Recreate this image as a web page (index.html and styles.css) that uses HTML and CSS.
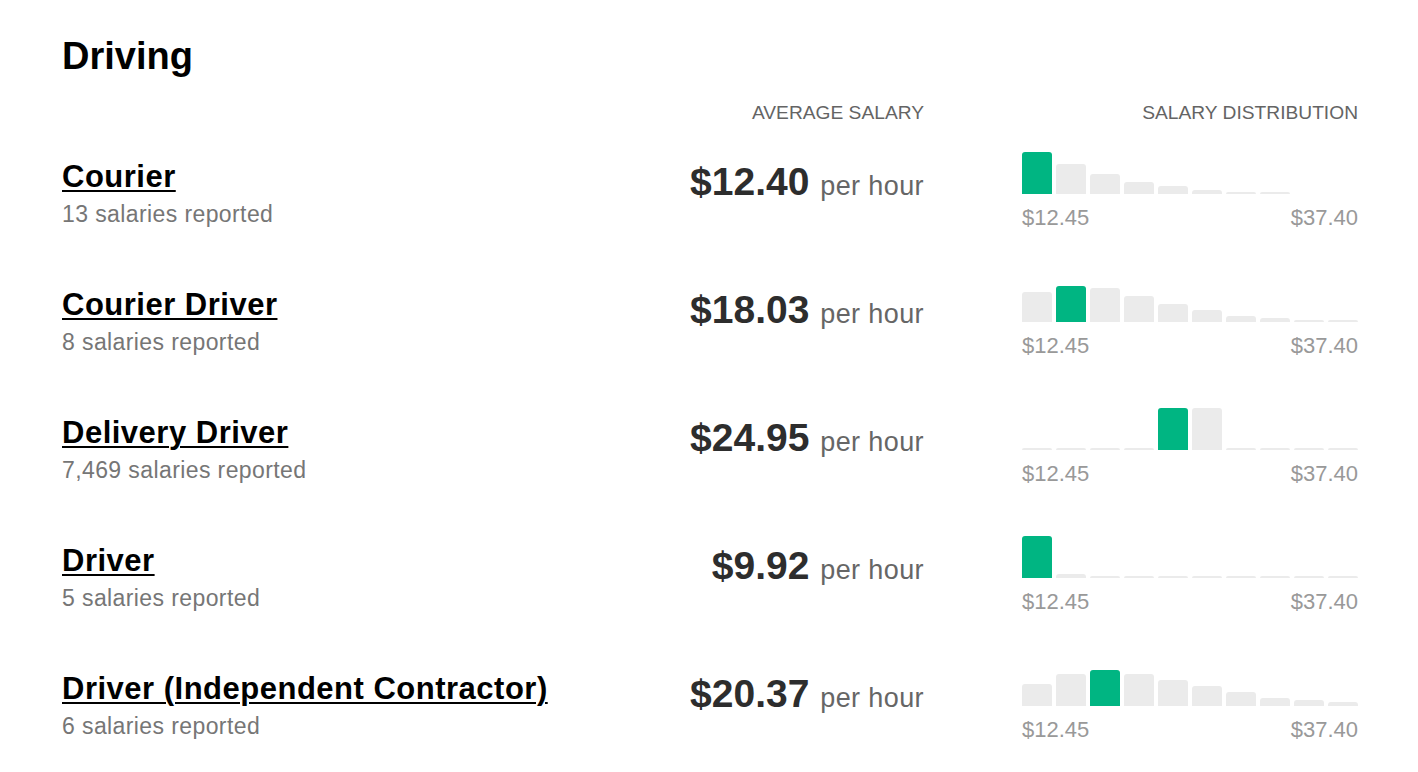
FILE: index.html
```html
<!DOCTYPE html>
<html lang="en">
<head>
<meta charset="utf-8">
<title>Driving salaries</title>
<link rel="stylesheet" href="styles.css">
</head>
<body>
<main class="page">
  <h1 class="heading">Driving</h1>
  <div class="grid head">
    <div></div>
    <div class="col-label">AVERAGE SALARY</div>
    <div class="col-label">SALARY DISTRIBUTION</div>
  </div>
  <div class="rows">
    <div class="grid row">
      <div class="job"><a class="job-title" href="#">Courier</a><div class="job-sub">13 salaries reported</div></div>
      <div class="salary"><span class="amount">$12.40</span> <span class="unit">per hour</span></div>
      <div class="chart">
        <div class="bars">
          <span class="bar on" style="height:42px"></span><span class="bar" style="height:30px"></span><span class="bar" style="height:20px"></span><span class="bar" style="height:12px"></span><span class="bar" style="height:8px"></span><span class="bar" style="height:4px"></span><span class="bar" style="height:2px"></span><span class="bar" style="height:2px"></span><span class="bar" style="height:0px"></span><span class="bar" style="height:0px"></span>
        </div>
        <div class="range"><span>$12.45</span><span>$37.40</span></div>
      </div>
    </div>
    <div class="grid row">
      <div class="job"><a class="job-title" href="#">Courier Driver</a><div class="job-sub">8 salaries reported</div></div>
      <div class="salary"><span class="amount">$18.03</span> <span class="unit">per hour</span></div>
      <div class="chart">
        <div class="bars">
          <span class="bar" style="height:30px"></span><span class="bar on" style="height:36px"></span><span class="bar" style="height:34px"></span><span class="bar" style="height:26px"></span><span class="bar" style="height:18px"></span><span class="bar" style="height:12px"></span><span class="bar" style="height:6px"></span><span class="bar" style="height:4px"></span><span class="bar" style="height:2px"></span><span class="bar" style="height:2px"></span>
        </div>
        <div class="range"><span>$12.45</span><span>$37.40</span></div>
      </div>
    </div>
    <div class="grid row">
      <div class="job"><a class="job-title" href="#">Delivery Driver</a><div class="job-sub">7,469 salaries reported</div></div>
      <div class="salary"><span class="amount">$24.95</span> <span class="unit">per hour</span></div>
      <div class="chart">
        <div class="bars">
          <span class="bar" style="height:2px"></span><span class="bar" style="height:2px"></span><span class="bar" style="height:2px"></span><span class="bar" style="height:2px"></span><span class="bar on" style="height:42px"></span><span class="bar" style="height:42px"></span><span class="bar" style="height:2px"></span><span class="bar" style="height:2px"></span><span class="bar" style="height:2px"></span><span class="bar" style="height:2px"></span>
        </div>
        <div class="range"><span>$12.45</span><span>$37.40</span></div>
      </div>
    </div>
    <div class="grid row">
      <div class="job"><a class="job-title" href="#">Driver</a><div class="job-sub">5 salaries reported</div></div>
      <div class="salary"><span class="amount">$9.92</span> <span class="unit">per hour</span></div>
      <div class="chart">
        <div class="bars">
          <span class="bar on" style="height:42px"></span><span class="bar" style="height:4px"></span><span class="bar" style="height:2px"></span><span class="bar" style="height:2px"></span><span class="bar" style="height:2px"></span><span class="bar" style="height:2px"></span><span class="bar" style="height:2px"></span><span class="bar" style="height:2px"></span><span class="bar" style="height:2px"></span><span class="bar" style="height:2px"></span>
        </div>
        <div class="range"><span>$12.45</span><span>$37.40</span></div>
      </div>
    </div>
    <div class="grid row">
      <div class="job"><a class="job-title" href="#">Driver (Independent Contractor)</a><div class="job-sub">6 salaries reported</div></div>
      <div class="salary"><span class="amount">$20.37</span> <span class="unit">per hour</span></div>
      <div class="chart">
        <div class="bars">
          <span class="bar" style="height:22px"></span><span class="bar" style="height:32px"></span><span class="bar on" style="height:36px"></span><span class="bar" style="height:32px"></span><span class="bar" style="height:26px"></span><span class="bar" style="height:20px"></span><span class="bar" style="height:14px"></span><span class="bar" style="height:8px"></span><span class="bar" style="height:6px"></span><span class="bar" style="height:4px"></span>
        </div>
        <div class="range"><span>$12.45</span><span>$37.40</span></div>
      </div>
    </div>
  </div>
</main>
</body>
</html>
```

FILE: styles.css
```css
* { box-sizing: border-box; }
html, body { margin: 0; padding: 0; background: #fff; }
body {
  font-family: "Liberation Sans", Arial, Helvetica, sans-serif;
  color: #333;
}
.page {
  padding: 34px 60px 0 62px;
}
.heading {
  margin: 0;
  font-size: 38px;
  line-height: 44px;
  font-weight: 700;
  color: #000;
}
.grid {
  display: grid;
  grid-template-columns: 1fr auto 336px;
  column-gap: 98px;
  align-items: start;
}
.head {
  margin-top: 24px;
}
.col-label {
  font-size: 19.2px;
  line-height: 22px;
  color: #646464;
  text-align: right;
}
.rows {
  margin-top: 28px;
  display: flex;
  flex-direction: column;
  gap: 49px;
}
.job {
  padding-top: 7px;
  white-space: nowrap;
}
.job-title {
  display: inline-block;
  font-size: 31px;
  line-height: 36px;
  font-weight: 700;
  letter-spacing: 0.5px;
  color: #000;
  text-decoration: underline;
  text-decoration-thickness: 2px;
  text-underline-offset: 3px;
}
.job-sub {
  margin-top: 5px;
  font-size: 23px;
  line-height: 28px;
  letter-spacing: 0.4px;
  color: #767676;
}
.salary {
  margin-top: 6px;
  text-align: right;
  white-space: nowrap;
  font-size: 39px;
  line-height: 48px;
  font-weight: 700;
  color: #2d2d2d;
}
.unit {
  font-size: 27px;
  font-weight: 400;
  letter-spacing: 0.4px;
  color: #666;
}
.bars {
  display: flex;
  align-items: flex-end;
  gap: 4px;
  height: 42px;
}
.bar {
  flex: 1 1 0;
  background: #ebebeb;
  border-radius: 3px 3px 0 0;
}
.bar.on {
  background: #00b582;
}
.range {
  margin-top: 11px;
  display: flex;
  justify-content: space-between;
  font-size: 22px;
  line-height: 26px;
  color: #999;
}
```
